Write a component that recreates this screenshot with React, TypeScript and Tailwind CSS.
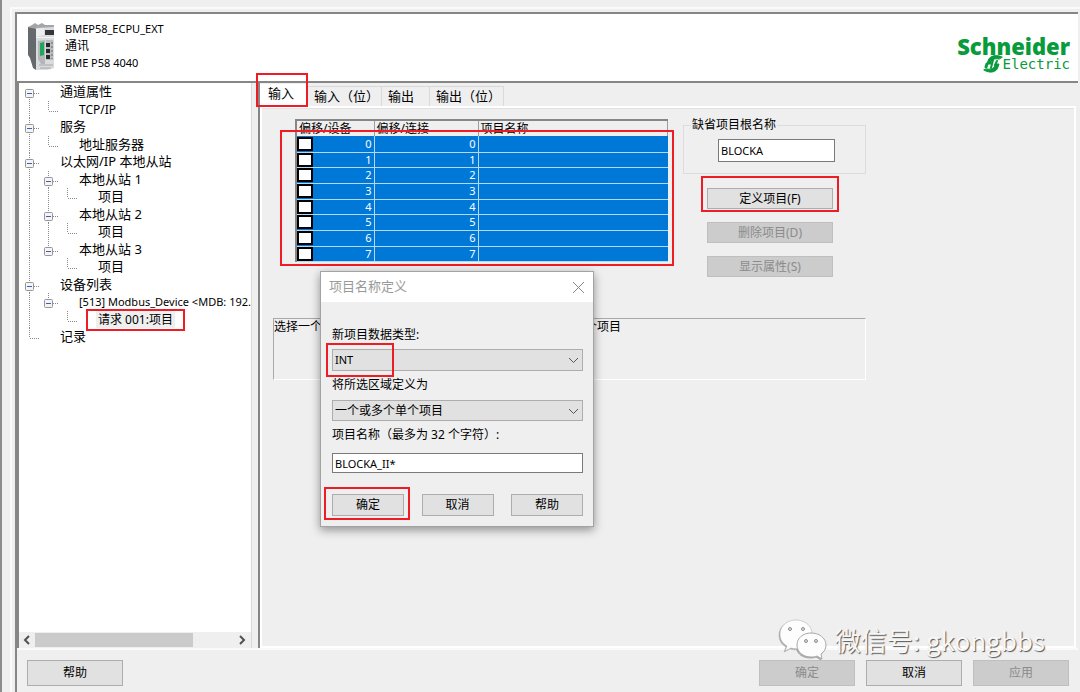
import { FC, ReactNode, useState } from "react"

type TreeRow = {
  id: number
  cells: string
  label: string
}

// b: box, line below / B: box, line through / E: box, line above
// L: elbow / |: line / .: empty
const treeRows: TreeRow[] = [
  { id: 1, cells: 'b', label: '通道属性' },
  { id: 2, cells: '|L', label: 'TCP/IP' },
  { id: 3, cells: 'B', label: '服务' },
  { id: 4, cells: '|L', label: '地址服务器' },
  { id: 5, cells: 'B', label: '以太网/IP 本地从站' },
  { id: 6, cells: '|B', label: '本地从站 1' },
  { id: 7, cells: '||L', label: '项目' },
  { id: 8, cells: '|B', label: '本地从站 2' },
  { id: 9, cells: '||L', label: '项目' },
  { id: 10, cells: '|E', label: '本地从站 3' },
  { id: 11, cells: '|.L', label: '项目' },
  { id: 12, cells: 'B', label: '设备列表' },
  { id: 13, cells: '|E', label: '[513] Modbus_Device <MDB: 192.' },
  { id: 14, cells: '|.L', label: '请求 001:项目' },
  { id: 15, cells: 'L', label: '记录' },
]

const tabs = [
  { name: '输入', width: 'w-12' },
  { name: '输入（位）', width: 'w-[74px]' },
  { name: '输出', width: 'w-12' },
  { name: '输出（位）', width: 'w-[74px]' },
]
const offsets = [0, 1, 2, 3, 4, 5, 6, 7]

const Mark: FC<{ className: string }> = ({ className }) => (
  <span className={`absolute pointer-events-none border-2 border-[#ee1c25] ${className}`} />
)

const TreeCell: FC<{ kind: string }> = ({ kind }) => {
  const isBox = 'bBE'.includes(kind)
  const up = 'BEL|'.includes(kind)
  const down = 'bB|'.includes(kind)
  return (
    <svg width="19" height="18" className="shrink-0" stroke="#8a8a8a" strokeDasharray="1 1" fill="none">
      {up && <path d="M9.5 0V10" />}
      {down && <path d="M9.5 10V18" />}
      {(isBox || kind === 'L') && <path d="M10 10.500H20" />}
      {isBox && (
        <g strokeDasharray="none">
          <rect x="5.500" y="6.500" width="8" height="8" rx="1" fill="#f4f4f4" stroke="#959595" />
          <path d="M7 10.500H12" stroke="#3f5fb0" />
        </g>
      )}
    </svg>
  )
}

const PushButton: FC<{ children: ReactNode, className?: string, disabled?: boolean }> = ({ children, className = '', disabled = false }) => (
  <button
    type="button"
    disabled={disabled}
    className={`flex items-center justify-center border border-[#adadad] bg-[#e1e1e1] text-black
      disabled:border-[#bfbfbf] disabled:bg-[#cccccc] disabled:text-[#8b8b8b] ${className}`}
  >
    {children}
  </button>
)

const Header: FC = () => (
  <header className="flex h-[71px] shrink-0 items-start border-t-2 border-b-2 border-[#868686] bg-white pl-2.5">
    <svg width="28" height="50" viewBox="0 0 28 50" className="mt-2">
      <path d="M1 5L9 6V48L6 46L3 36L1 33Z" fill="#66696c" />
      <path d="M1 5L5 3L8 1L11 3L15 1L18 3L27 3V7H9Z" fill="#a3a6a8" />
      <path d="M9 6L27 5V46L20 48H9Z" fill="#d9dbdd" />
      <path d="M9 7L17 6V13L9 15Z" fill="#eceded" />
      <rect x="18" y="8" width="9" height="5" fill="#34373b" />
      <path d="M9 15.500H27" stroke="#f3f3f3" />
      <path d="M11 19L18 18V42H14L11 37Z" fill="#b4b7b9" />
      <path d="M13 21L17 20V33L13 34Z" fill="#1fa658" />
      <rect x="19" y="18" width="7" height="20" fill="#b9bbbd" />
      <path d="M19 21H23V25H19ZM19 27H23V31H19ZM19 33H23V37H19Z" fill="#26292c" />
      <path d="M25 20V37" stroke="#666" strokeDasharray="2 2" />
      <path d="M12 43H26M13 46H24" stroke="#a4a6a8" />
    </svg>
    <div className="ml-2.5 mt-[7px] flex-1 text-[11px] leading-4">
      <div>BMEP58_ECPU_EXT</div>
      <div className="text-[12px] leading-[18px]">通讯</div>
      <div>BME P58 4040</div>
    </div>
    <div className="mr-2 mt-[22px] text-[#079b3c]">
      <div className="font-['Open_Sans'] text-[22px] leading-5 font-extrabold">Schneider</div>
      <div className="flex items-center justify-end">
        <svg width="20" height="18" viewBox="0 0 20 18" className="-my-0.5" fill="none" stroke="#079b3c" strokeLinecap="round">
          <path d="M19 2C13 -1 6 1 5 6L4 9H8C8 5 11 3 16 4Z" fill="#079b3c" />
          <path d="M1 15C7 19 14 17 15 12L16 9H12C12 13 9 15 4 14Z" fill="#079b3c" />
          <path d="M10 5L8 13M14 6L12 10" strokeWidth="2" />
          <path d="M4 9L3 12" strokeWidth="3" />
        </svg>
        <div className="font-['DejaVu_Sans_Mono'] text-[14px] leading-4">Electric</div>
      </div>
    </div>
  </header>
)

const Tree: FC = () => (
  <nav className="flex w-[235px] shrink-0 flex-col border-l-2 border-r border-l-[#868686] border-r-[#d9d9d9] bg-white">
    <ul className="flex-1 overflow-hidden pl-px text-[13px]">
      {treeRows.map((row) => (
        <li key={row.id} className="flex odd:h-[18px] even:h-[17px]">
          {row.cells.split('').map((kind, i) => <TreeCell key={i} kind={kind} />)}
          <span className="relative ml-[19px] leading-4 whitespace-nowrap">
            <span
              className={`block px-0.5 ${row.id === 14 ? 'bg-[#efefef] pt-px text-[12px]' : ''} ${row.id === 2 ? 'pt-px text-[12px]' : ''} ${row.id === 13 ? 'pt-px text-[11px]' : ''}`}
            >
              {row.label}
            </span>
            {row.id === 14 && <Mark className="-inset-x-2.5 -top-0.5 h-[22px]" />}
          </span>
        </li>
      ))}
    </ul>
    <div className="flex h-4 items-center bg-[#efefef]">
      <svg width="16" height="16" fill="none" stroke="#505050" strokeWidth="2"><path d="M10 4L6 8L10 12" /></svg>
      <div className="h-[14px] w-[158px] bg-[#cbcbcb]" />
      <svg width="16" height="16" className="ml-auto" fill="none" stroke="#505050" strokeWidth="2"><path d="M5 4L9 8L5 12" /></svg>
    </div>
  </nav>
)

const ItemTable: FC = () => (
  <div className="relative w-[373px] border-t-2 border-l-2 border-t-[#868686] border-l-[#868686]">
    <table className="w-full table-fixed border-collapse">
      <thead>
        <tr className="h-[15px]">
          {['偏移/设备', '偏移/连接', '项目名称'].map((name, i) => (
            <th
              key={name}
              colSpan={i === 0 ? 2 : 1}
              className={`border-r border-[#9d9d9d] p-0 pl-0.5 text-left leading-[14px] font-normal ${i === 0 ? 'w-[77px]' : i === 1 ? 'w-[104px]' : ''}`}
            >
              {name}
            </th>
          ))}
        </tr>
      </thead>
      <tbody className="bg-[#0078d7] text-[11px] text-white">
        {offsets.map((n) => (
          <tr key={n} className="h-4 border-b border-[#b5d9f5] nth-[3n+2]:h-[15px]">
            <td className="w-4 p-0">
              <input
                type="checkbox"
                aria-label={`${n}`}
                className="block h-[14px] w-4 appearance-none border-2 border-black bg-white checked:bg-gray-500"
              />
            </td>
            <td className="border-r border-[#b5d9f5] p-0 pr-0.5 text-right leading-[14px]">{n}</td>
            <td className="border-r border-[#b5d9f5] p-0 pr-0.5 text-right leading-[14px]">{n}</td>
            <td className="p-0" />
          </tr>
        ))}
      </tbody>
    </table>
    <Mark className="-left-[17px] -right-1.5 top-[9px] -bottom-1" />
  </div>
)

const Chevron: FC = () => (
  <svg width="11" height="7" className="absolute right-1 top-2 pointer-events-none" fill="none" stroke="#555"><path d="M1 1L5.500 5.500L10 1" /></svg>
)

const DefineDialog: FC = () => {
  const [name, setName] = useState('BLOCKA_II*')

  return (
    <div
      role="dialog"
      aria-label="项目名称定义"
      className="absolute left-[60px] top-[188px] w-[274px] border border-[#a3a3a3] bg-[#efefef] pb-2.5 shadow-[0_3px_9px_rgba(0,0,0,0.4)]"
    >
      <div className="flex h-[30px] items-center justify-between bg-white px-2 text-[13px] text-[#999]">
        <span>项目名称定义</span>
        <button type="button" aria-label="关闭">
          <svg width="13" height="13" stroke="#888" fill="none"><path d="M1 1L12 12M12 1L1 12" /></svg>
        </button>
      </div>
      <div className="flex flex-col pr-2.5 pl-[11px] pt-[25px]">
        <label htmlFor="type" className="leading-4">新项目数据类型:</label>
        <div className="relative mt-1.5">
          <select id="type" className="block h-[22px] w-full appearance-none border border-[#adadad] bg-[#e1e1e1] px-0.5 text-[11px]">
            <option>INT</option>
          </select>
          <Chevron />
          <Mark className="-left-1.5 -top-1.5 h-[34px] w-[68px]" />
        </div>
        <label htmlFor="area" className="mt-1.5 leading-4">将所选区域定义为</label>
        <div className="relative mt-[7px]">
          <select id="area" className="block h-[21px] w-full appearance-none border border-[#adadad] bg-[#e1e1e1] px-0.5">
            <option>一个或多个单个项目</option>
          </select>
          <Chevron />
        </div>
        <label htmlFor="name" className="mt-1.5 leading-4">项目名称（最多为 32 个字符）:</label>
        <input
          id="name"
          value={name}
          onChange={(e) => setName(e.target.value)}
          className="mt-2.5 h-5 border border-[#7a7a7a] bg-white px-0.5 text-[11px]"
        />
        <div className="mt-[21px] flex justify-between">
          <div className="relative">
            <PushButton className="h-[22px] w-[72px]">确定</PushButton>
            <Mark className="-left-2 -right-1.5 -top-[7px] -bottom-1" />
          </div>
          <PushButton className="h-[22px] w-[72px]">取消</PushButton>
          <PushButton className="h-[22px] w-[72px]">帮助</PushButton>
        </div>
      </div>
    </div>
  )
}

const Watermark: FC = () => (
  <div className="absolute right-[35px] bottom-[31px] flex items-center gap-2 pointer-events-none">
    <svg width="48" height="42" viewBox="0 0 48 42" fill="#fdfdfd" stroke="#a8a8a8" className="drop-shadow-[-1px_1px_0_#aaa]">
      <path d="M17 1C8 1 1 7 1 15C1 20 3 24 8 27L6 32L12 29C15 30 19 30 22 29L33 13C32 6 25 1 17 1Z" strokeWidth="0.500" />
      <path d="M32 14C24 14 18 19 18 26C18 33 24 38 32 38C34 38 36 38 38 37L43 40L42 35C45 33 47 30 47 26C47 19 40 14 32 14Z" />
      <g fill="#ddd" stroke="#8d8d8d">
        <circle cx="11" cy="10" r="1.500" /><circle cx="24" cy="10" r="1.500" />
        <circle cx="27" cy="22" r="1.500" /><circle cx="37" cy="22" r="1.500" />
      </g>
    </svg>
    <span className="font-['Noto_Sans_CJK_SC'] text-[26px] leading-[40px] text-[#f7f7f7] text-shadow-[1px_1px_1px_#555]">微信号: gkongbbs</span>
  </div>
)

const App: FC = () => {
  const [active, setActive] = useState(0)
  const [root, setRoot] = useState('BLOCKA')

  return (
    <div className="relative flex h-screen flex-col overflow-hidden border-l-2 border-[#8c8c8c] bg-[#efefef] pt-[7px] pl-2 font-['Noto_Sans','Noto_Sans_CJK_SC',sans-serif] text-[12px] text-black">
      <div className="flex min-h-0 flex-1 flex-col border-t-2 border-l-2 border-[#fafafa] pt-[3px] pl-[3px] pr-[2px]">
        <div className="flex min-h-0 flex-1 flex-col border-l-2 border-[#868686]">
          <Header />
          <div className="flex min-h-0 flex-1">
            <Tree />
            <main className="relative ml-1.5 flex min-w-0 flex-1 flex-col border-l-2 border-[#868686]">
              <div className="flex h-[23px] items-end pt-px text-[13px]" role="tablist">
                {tabs.map((tab, i) => (
                  <button
                    key={tab.name}
                    type="button"
                    role="tab"
                    aria-selected={active === i}
                    onClick={() => setActive(i)}
                    className={`relative text-left whitespace-nowrap ${tab.width} ${i === active
                      ? 'h-[22px] bg-white pl-2 pb-1'
                      : 'h-5 border-t border-r border-[#d9d9d9] pl-1.5 pb-1'}`}
                  >
                    {tab.name}
                    {i === 0 && <Mark className="-left-1 right-0 -top-[11px] -bottom-px" />}
                  </button>
                ))}
              </div>
              <div className="mr-0.5 flex-1 border-2 border-white pt-[11px] pl-[11px] shadow-[inset_0_1px_0_#e2e2e2]">
                <div className="flex h-[199px] items-start pl-[22px]">
                  <ItemTable />
                  <div className="ml-[15px] w-[183px]">
                    <fieldset className="h-[55px] border border-[#dcdcdc] pl-[7px]">
                      <legend className="px-px leading-3">缺省项目根名称</legend>
                      <input
                        aria-label="缺省项目根名称"
                        value={root}
                        onChange={(e) => setRoot(e.target.value)}
                        className="ml-[27px] mt-2 block h-[23px] w-[117px] border border-[#7a7a7a] bg-white px-0.5 text-[11px]"
                      />
                    </fieldset>
                    <div className="mt-3.5 ml-6 flex w-[126px] flex-col gap-[13px]">
                      <div className="relative">
                        <PushButton className="h-[21px] w-full">定义项目(F)</PushButton>
                        <Mark className="-inset-x-1.5 -top-3 -bottom-[3px]" />
                      </div>
                      <PushButton className="h-[21px] w-full" disabled>删除项目(D)</PushButton>
                      <PushButton className="h-[21px] w-full" disabled>显示属性(S)</PushButton>
                    </div>
                  </div>
                </div>
                <div className="flex h-[62px] w-[593px] border border-t-[#a9a9a9] border-r-white border-b-white border-l-[#a9a9a9] leading-4">
                  <span className="w-[311px]">选择一个</span>
                  <span>个项目</span>
                </div>
              </div>
              <DefineDialog />
            </main>
          </div>
          <footer className="flex h-[44px] shrink-0 items-start gap-[11px] border-t-2 border-[#fafafa] pt-2.5 pr-[9px] pl-2.5">
            <PushButton className="mr-auto h-[26px] w-24">帮助</PushButton>
            <PushButton className="h-[26px] w-24" disabled>确定</PushButton>
            <PushButton className="h-[26px] w-24">取消</PushButton>
            <PushButton className="h-[26px] w-24" disabled>应用</PushButton>
          </footer>
        </div>
      </div>
      <Watermark />
    </div>
  )
}

export default App
